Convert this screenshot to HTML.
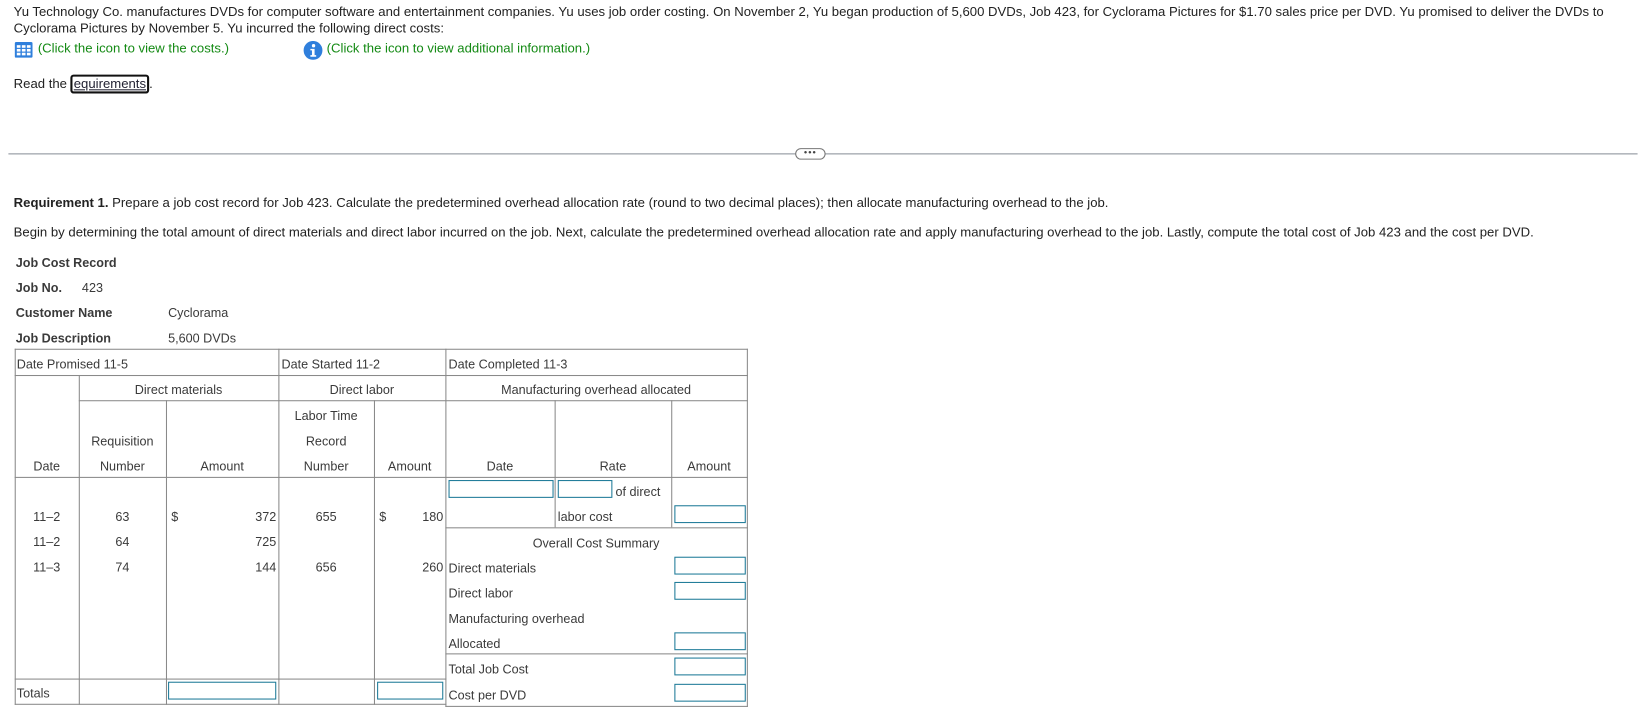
<!DOCTYPE html>
<html><head><meta charset="utf-8"><style>
html,body{margin:0;width:1647px;height:716px;background:#fff;overflow:hidden}
#w{position:absolute;left:0;top:0;width:1568px;height:682px;transform:scale(1.0504);transform-origin:0 0;font-family:"Liberation Sans",sans-serif;font-size:12.5px;color:#222}
.t{position:absolute;line-height:16px;white-space:nowrap}
.g{color:#3a3a3a;font-size:12px}
.h{position:absolute;height:1px;background:#8a8a8a}
.v{position:absolute;width:1px;background:#8a8a8a}
.in{position:absolute;border:1px solid #1d7a98;height:17px;box-sizing:border-box;background:#fff}
.gr{color:#148a14}
b{font-weight:bold}
</style></head><body><div id="w">
<div class="t" style="left:13px;top:3px">Yu Technology Co. manufactures DVDs for computer software and entertainment companies. Yu uses job order costing. On November 2, Yu began production of 5,600 DVDs, Job 423, for Cyclorama Pictures for $1.70 sales price per DVD. Yu promised to deliver the DVDs to</div>
<div class="t" style="left:13px;top:19px">Cyclorama Pictures by November 5. Yu incurred the following direct costs:</div>
<svg style="position:absolute;left:14px;top:40px" width="17" height="15" viewBox="0 0 17 15"><rect x="0" y="0" width="17" height="15" rx="1.5" fill="#2f7fdc"/><g fill="#fff"><rect x="2" y="3" width="3.5" height="2.5"/><rect x="6.8" y="3" width="3.5" height="2.5"/><rect x="11.6" y="3" width="3.5" height="2.5"/><rect x="2" y="6.6" width="3.5" height="2.5"/><rect x="6.8" y="6.6" width="3.5" height="2.5"/><rect x="11.6" y="6.6" width="3.5" height="2.5"/><rect x="2" y="10.2" width="3.5" height="2.5"/><rect x="6.8" y="10.2" width="3.5" height="2.5"/><rect x="11.6" y="10.2" width="3.5" height="2.5"/></g></svg>
<div class="t gr" style="left:36px;top:38px">(Click the icon to view the costs.)</div>
<svg style="position:absolute;left:289px;top:39px" width="18" height="18" viewBox="0 0 18 18"><circle cx="9" cy="9" r="9" fill="#2f7fdc"/><circle cx="9.5" cy="4.5" r="1.6" fill="#fff"/><path d="M6.5 7.5h4v6h1.5v1.5h-5.5v-1.5h1.5v-4.5h-1.5z" fill="#fff"/></svg>
<div class="t gr" style="left:311px;top:38px">(Click the icon to view additional information.)</div>
<div class="t" style="left:13px;top:72px">Read the <span style="border:2px solid #111;border-radius:3px;padding:0 1px;color:#223;text-decoration:underline">equirements</span>.</div>
<div class="h" style="left:8px;top:146px;width:1551px;background:#8a9099"></div>
<div style="position:absolute;left:757px;top:141px;width:27px;height:9px;border:1px solid #777;border-radius:6px;background:#fff;font-size:9px;line-height:7px;text-align:center;color:#444;letter-spacing:1px">•••</div>
<div class="t" style="left:13px;top:185px"><b>Requirement 1.</b> Prepare a job cost record for Job 423. Calculate the predetermined overhead allocation rate (round to two decimal places); then allocate manufacturing overhead to the job.</div>
<div class="t" style="left:13px;top:213px">Begin by determining the total amount of direct materials and direct labor incurred on the job. Next, calculate the predetermined overhead allocation rate and apply manufacturing overhead to the job. Lastly, compute the total cost of Job 423 and the cost per DVD.</div>
<div class="t g" style="left:15px;top:242px"><b>Job Cost Record</b></div>
<div class="t g" style="left:15px;top:266px"><b>Job No.</b></div><div class="t g" style="left:78px;top:266px">423</div>
<div class="t g" style="left:15px;top:290px"><b>Customer Name</b></div><div class="t g" style="left:160px;top:290px">Cyclorama</div>
<div class="t g" style="left:15px;top:314px"><b>Job Description</b></div><div class="t g" style="left:160px;top:314px">5,600 DVDs</div>
<div class="h" style="left:14px;top:332px;width:698px"></div>
<div class="h" style="left:14px;top:357px;width:698px"></div>
<div class="h" style="left:75px;top:381px;width:637px"></div>
<div class="h" style="left:14px;top:454px;width:698px"></div>
<div class="h" style="left:424px;top:502px;width:288px"></div>
<div class="h" style="left:424px;top:622px;width:288px"></div>
<div class="h" style="left:14px;top:646px;width:411px"></div>
<div class="h" style="left:14px;top:670px;width:411px"></div>
<div class="h" style="left:424px;top:672px;width:288px"></div>
<div class="v" style="left:14px;top:332px;height:339px"></div>
<div class="v" style="left:265px;top:332px;height:339px"></div>
<div class="v" style="left:424px;top:332px;height:341px"></div>
<div class="v" style="left:711px;top:332px;height:341px"></div>
<div class="v" style="left:75px;top:357px;height:314px"></div>
<div class="v" style="left:158px;top:381px;height:290px"></div>
<div class="v" style="left:356px;top:381px;height:290px"></div>
<div class="v" style="left:528px;top:381px;height:121px"></div>
<div class="v" style="left:639px;top:381px;height:121px"></div>
<div class="t g" style="left:16px;top:339px">Date Promised 11-5</div>
<div class="t g" style="left:268px;top:339px">Date Started 11-2</div>
<div class="t g" style="left:427px;top:339px">Date Completed 11-3</div>
<div class="t g" style="left:75px;width:190px;text-align:center;top:363px">Direct materials</div>
<div class="t g" style="left:265px;width:159px;text-align:center;top:363px">Direct labor</div>
<div class="t g" style="left:424px;width:287px;text-align:center;top:363px">Manufacturing overhead allocated</div>
<div class="t g" style="left:14px;width:61px;text-align:center;top:436px">Date</div>
<div class="t g" style="left:75px;width:83px;text-align:center;top:412px">Requisition</div>
<div class="t g" style="left:75px;width:83px;text-align:center;top:436px">Number</div>
<div class="t g" style="left:158px;width:107px;text-align:center;top:436px">Amount</div>
<div class="t g" style="left:265px;width:91px;text-align:center;top:388px">Labor Time</div>
<div class="t g" style="left:265px;width:91px;text-align:center;top:412px">Record</div>
<div class="t g" style="left:265px;width:91px;text-align:center;top:436px">Number</div>
<div class="t g" style="left:356px;width:68px;text-align:center;top:436px">Amount</div>
<div class="t g" style="left:424px;width:104px;text-align:center;top:436px">Date</div>
<div class="t g" style="left:528px;width:111px;text-align:center;top:436px">Rate</div>
<div class="t g" style="left:639px;width:72px;text-align:center;top:436px">Amount</div>
<div class="t g" style="left:14px;width:61px;text-align:center;top:484px">11–2</div>
<div class="t g" style="left:14px;width:61px;text-align:center;top:508px">11–2</div>
<div class="t g" style="left:14px;width:61px;text-align:center;top:532px">11–3</div>
<div class="t g" style="left:75px;width:83px;text-align:center;top:484px">63</div>
<div class="t g" style="left:75px;width:83px;text-align:center;top:508px">64</div>
<div class="t g" style="left:75px;width:83px;text-align:center;top:532px">74</div>
<div class="t g" style="left:163px;top:484px">$</div>
<div class="t g" style="left:200px;width:63px;text-align:right;top:484px">372</div>
<div class="t g" style="left:200px;width:63px;text-align:right;top:508px">725</div>
<div class="t g" style="left:200px;width:63px;text-align:right;top:532px">144</div>
<div class="t g" style="left:265px;width:91px;text-align:center;top:484px">655</div>
<div class="t g" style="left:265px;width:91px;text-align:center;top:532px">656</div>
<div class="t g" style="left:361px;top:484px">$</div>
<div class="t g" style="left:380px;width:42px;text-align:right;top:484px">180</div>
<div class="t g" style="left:380px;width:42px;text-align:right;top:532px">260</div>
<div class="in" style="left:427px;top:457px;width:100px"></div>
<div class="in" style="left:531px;top:457px;width:52px"></div>
<div class="t g" style="left:586px;top:460px">of direct</div>
<div class="t g" style="left:531px;top:484px">labor cost</div>
<div class="in" style="left:642px;top:481px;width:68px"></div>
<div class="t g" style="left:424px;width:287px;text-align:center;top:509px">Overall Cost Summary</div>
<div class="t g" style="left:427px;top:533px">Direct materials</div>
<div class="t g" style="left:427px;top:557px">Direct labor</div>
<div class="t g" style="left:427px;top:581px">Manufacturing overhead</div>
<div class="t g" style="left:427px;top:605px">Allocated</div>
<div class="t g" style="left:427px;top:629px">Total Job Cost</div>
<div class="t g" style="left:427px;top:654px">Cost per DVD</div>
<div class="in" style="left:642px;top:530px;width:68px"></div>
<div class="in" style="left:642px;top:554px;width:68px"></div>
<div class="in" style="left:642px;top:602px;width:68px"></div>
<div class="in" style="left:642px;top:626px;width:68px"></div>
<div class="in" style="left:642px;top:651px;width:68px"></div>
<div class="t g" style="left:16px;top:652px">Totals</div>
<div class="in" style="left:160px;top:649px;width:103px"></div>
<div class="in" style="left:359px;top:649px;width:63px"></div>
</div></body></html>
